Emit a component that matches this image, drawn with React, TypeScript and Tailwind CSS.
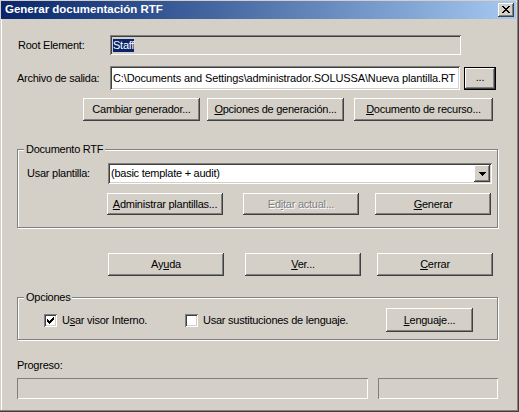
import React from 'react';
import clsx from 'clsx';

// classic win2000 bevels
const raised = "shadow-[inset_-1px_-1px_#404040,inset_1px_1px_#ffffff,inset_-2px_-2px_#808080,inset_2px_2px_#d4d0c8]";
const sunken = "shadow-[inset_1px_1px_#808080,inset_-1px_-1px_#ffffff,inset_2px_2px_#404040,inset_-2px_-2px_#d4d0c8]";
const etched = "border border-[#808080] shadow-[inset_1px_1px_#ffffff,1px_1px_#ffffff]";

const Pixels = ({ rows, className }: { rows: string[]; className?: string }) => (
  <svg width={rows[0].length} height={rows.length} className={className} shapeRendering="crispEdges">
    {rows.map((r, y) =>
      r.split('').map((c, x) => (c === 'X' ? <rect key={`${x}-${y}`} x={x} y={y} width={1} height={1} fill="#000" /> : null))
    )}
  </svg>
);

const closeGlyph = ['XX....XX', '.XX..XX.', '..XXXX..', '...XX...', '..XXXX..', '.XX..XX.', 'XX....XX'];
const checkGlyph = ['......X', '.....XX', 'X...XXX', 'XX.XXX.', 'XXXXX..', '.XXX...', '..X....'];
const arrowGlyph = ['XXXXXXX', '.XXXXX.', '..XXX..', '...X...'];

const Btn = ({ children, className, disabled }: { children: React.ReactNode; className?: string; disabled?: boolean }) => (
  <button
    className={clsx(
      'flex items-center justify-center bg-[#d4d0c8] leading-[13px]',
      raised,
      disabled ? 'text-[#808080] [text-shadow:1px_1px_0_#ffffff]' : 'text-black',
      className
    )}
  >
    {children}
  </button>
);

const Check = ({ checked }: { checked?: boolean }) => (
  <span className={clsx('flex h-[13px] w-[13px] shrink-0 items-center justify-center bg-white', sunken)}>
    {checked && <Pixels rows={checkGlyph} />}
  </span>
);

const Group = ({ title, className, children }: { title: string; className?: string; children: React.ReactNode }) => (
  <div className={clsx('relative w-[481px]', etched, className)}>
    <span className="absolute -top-[7px] left-[6px] bg-[#d4d0c8] px-[2px] leading-[13px]">{title}</span>
    {children}
  </div>
);

export default function App() {
  return (
    <div className="h-[412px] w-[519px] overflow-hidden bg-[#d4d0c8] pt-[1px] font-['Liberation_Sans',Arial,sans-serif] text-[11px] tracking-[-0.25px] text-black shadow-[inset_-1px_-1px_#404040,inset_-2px_-2px_#808080,inset_1px_1px_#d4d0c8,inset_2px_2px_#ffffff]">
      {/* title bar */}
      <div className="ml-[1px] mr-[3px] flex h-[18px] items-center justify-between bg-linear-to-r from-[#0a246a] to-[#a6caf0] pl-[4px] pr-[2px]">
        <span className="text-[11.5px] font-bold tracking-normal text-white">Generar documentación RTF</span>
        <span className={clsx('flex h-[14px] w-[16px] items-center justify-center bg-[#d4d0c8]', raised)}>
          <Pixels rows={closeGlyph} className="-mt-[1px]" />
        </span>
      </div>

      <div className="flex flex-col pl-[17px]">
        <div className="mt-[16px] flex h-[20px] items-center">
          <span className="w-[93px] pl-[1px]">Root Element:</span>
          <div className={clsx('flex h-[20px] w-[351px] items-center pl-[3px]', sunken)}>
            <span className="bg-[#0a246a] leading-[13px] text-white">Staff</span>
          </div>
        </div>

        <div className="mt-[11px] flex h-[24px] items-start">
          <span className="w-[93px] self-center">Archivo de salida:</span>
          <div className={clsx('flex h-[24px] w-[350px] items-center overflow-hidden whitespace-nowrap bg-white pl-[3px] tracking-[-0.13px]', sunken)}>
            C:\Documents and Settings\administrador.SOLUSSA\Nueva plantilla.RT
          </div>
          <Btn className="ml-[4px] mt-[1px] h-[23px] w-[32px] border border-black pb-[2px]">...</Btn>
        </div>

        <div className="mt-[8px] flex pl-[66px]">
          <Btn className="h-[23px] w-[117px]">
            <span>Cambiar <u>g</u>enerador...</span>
          </Btn>
          <Btn className="ml-[7px] h-[23px] w-[137px]">
            <span><u>O</u>pciones de generación...</span>
          </Btn>
          <Btn className="ml-[10px] h-[23px] w-[139px]">
            <span><u>D</u>ocumento de recurso...</span>
          </Btn>
        </div>

        <Group title="Documento RTF" className="mt-[28px] h-[79px]">
          <div className="flex items-center pl-[9px] pt-[13px]">
            <span className="w-[81px]">Usar plantilla:</span>
            <div className={clsx('flex h-[21px] w-[384px] items-center justify-between bg-white pl-[3px] pr-[2px]', sunken)}>
              <span>(basic template + audit)</span>
              <span className={clsx('flex h-[17px] w-[16px] items-center justify-center bg-[#d4d0c8]', raised)}>
                <Pixels rows={arrowGlyph} />
              </span>
            </div>
          </div>
          <div className="mt-[9px] flex pl-[89px]">
            <Btn className="h-[22px] w-[116px]">
              <span><u>A</u>dministrar plantillas...</span>
            </Btn>
            <Btn disabled className="ml-[20px] h-[22px] w-[116px]">
              <span>Ed<u>i</u>tar actual...</span>
            </Btn>
            <Btn className="ml-[16px] h-[22px] w-[116px]">
              <span><u>G</u>enerar</span>
            </Btn>
          </div>
        </Group>

        <div className="mt-[25px] flex pl-[91px]">
          <Btn className="h-[23px] w-[116px]">
            <span>Ay<u>u</u>da</span>
          </Btn>
          <Btn className="ml-[21px] h-[23px] w-[116px]">
            <span><u>V</u>er...</span>
          </Btn>
          <Btn className="ml-[16px] h-[23px] w-[116px]">
            <span><u>C</u>errar</span>
          </Btn>
        </div>

        <Group title="Opciones" className="mt-[21px] h-[43px]">
          <div className="mt-[10px] flex h-[24px] items-center">
            <label className="ml-[26px] flex w-[141px] items-center gap-[5px]">
              <Check checked />
              <span>U<u>s</u>ar visor Interno.</span>
            </label>
            <label className="flex w-[201px] items-center gap-[5px]">
              <Check />
              <span>Usar sustituciones de lenguaje.</span>
            </label>
            <Btn className="h-[24px] w-[87px]">
              <span><u>L</u>enguaje...</span>
            </Btn>
          </div>
        </Group>

        <span className="mt-[19px] leading-[13px]">Progreso:</span>
        <div className="mt-[6px] flex">
          <div className="h-[21px] w-[351px] shadow-[inset_1px_1px_#808080,inset_-1px_-1px_#ffffff]" />
          <div className="ml-[10px] h-[21px] w-[120px] shadow-[inset_1px_1px_#808080,inset_-1px_-1px_#ffffff]" />
        </div>
      </div>
    </div>
  );
}
